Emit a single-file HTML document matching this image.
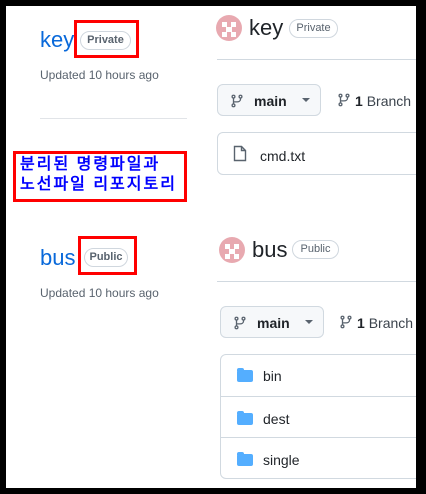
<!DOCTYPE html>
<html><head><meta charset="utf-8"><style>
*{margin:0;padding:0;box-sizing:border-box}
body{width:426px;height:494px;background:#000;position:relative;overflow:hidden;font-family:"Liberation Sans","Noto Sans CJK KR",sans-serif}
.pg{position:absolute;left:6px;top:6px;width:410px;height:482px;background:#fff}
.a{position:absolute}
.badge{position:absolute;border:1px solid #d0d7de;border-radius:10px;font-size:11px;color:#59636e;text-align:center;line-height:17px;font-weight:bold}
.red{position:absolute;border:3px solid #f00}
.upd{position:absolute;font-size:12px;color:#59636e}
.btn{position:absolute;background:#f6f8fa;border:1px solid #d1d9e0;border-radius:6px;font-size:14px;font-weight:bold;color:#1f2328}
.av{position:absolute;width:26px;height:26px;border-radius:50%;background:#e8a9b0;overflow:hidden}
.av i{position:absolute;background:#fff;width:5px;height:5px}
.row{position:absolute;left:0;right:0;height:41px;border-top:1px solid #d1d9e0;font-size:14px;color:#1f2328}
.fold{position:absolute;left:16px;top:16px;width:16px;height:12px;background:#54aeff;border-radius:2px}
.fold:before{content:"";position:absolute;left:0;top:-2px;width:7px;height:3px;background:#54aeff;border-radius:2px 2px 0 0}
</style></head><body>
<div class="pg"></div>
<div class="a" style="left:40px;top:27px;font-size:22px;color:#0969da">key</div>
<div class="red" style="left:74px;top:20px;width:65px;height:38px"></div>
<div class="badge" style="left:80px;top:31px;width:51px;height:19px">Private</div>
<div class="upd" style="left:40px;top:68px">Updated 10 hours ago</div>
<div class="a" style="left:40px;top:118px;width:147px;height:1px;background:#e1e4e8"></div>
<div class="red" style="left:13px;top:151px;width:174px;height:51px"></div>
<div class="a" style="left:20px;top:155px;font-size:16px;line-height:20px;color:#0000ff;font-weight:bold;font-family:'Liberation Sans','WenQuanYi Zen Hei',sans-serif;letter-spacing:2px;white-space:nowrap">분리된 명령파일과<br>노선파일 리포지토리</div>
<div class="a" style="left:40px;top:245px;font-size:22px;color:#0969da">bus</div>
<div class="red" style="left:78px;top:236px;width:59px;height:39px"></div>
<div class="badge" style="left:84px;top:248px;width:44px;height:19px">Public</div>
<div class="upd" style="left:40px;top:286px">Updated 10 hours ago</div>
<div class="av" style="left:216px;top:15px"><i style="left:6px;top:7px"></i><i style="left:15px;top:7px"></i><i style="left:10px;top:12px;width:6px"></i><i style="left:6px;top:17px"></i><i style="left:15px;top:17px"></i></div>
<div class="a" style="left:249px;top:15px;font-size:22px;color:#1f2328">key</div>
<div class="badge" style="left:289px;top:19px;width:49px;height:19px;font-weight:normal">Private</div>
<div class="a" style="left:217px;top:59px;width:199px;height:1px;background:#d1d9e0"></div>
<div class="btn" style="left:217px;top:84px;width:104px;height:32px">
<svg class="a" style="left:12px;top:8px" width="14" height="16" viewBox="0 0 16 16" fill="none" stroke="#59636e" stroke-width="1.5"><circle cx="4" cy="3" r="1.6"/><circle cx="4" cy="13" r="1.6"/><circle cx="12" cy="3" r="1.6"/><path d="M4 5v6M12 5v1c0 2-2 3-4 3H4"/></svg>
<span class="a" style="left:36px;top:8px">main</span><span class="a" style="left:84px;top:13px;border:4px solid transparent;border-top-color:#59636e"></span></div>
<svg class="a" style="left:337px;top:92px" width="14" height="16" viewBox="0 0 16 16" fill="none" stroke="#59636e" stroke-width="1.5"><circle cx="4" cy="3" r="1.6"/><circle cx="4" cy="13" r="1.6"/><circle cx="12" cy="3" r="1.6"/><path d="M4 5v6M12 5v1c0 2-2 3-4 3H4"/></svg>
<div class="a" style="left:355px;top:93px;font-size:14px;font-weight:bold;color:#1f2328">1 <span style="font-weight:normal;color:#3b434c">Branch</span></div>
<div class="a" style="left:217px;top:132px;width:210px;height:43px;border:1px solid #d1d9e0;border-radius:6px">
<svg class="a" style="left:15px;top:12px" width="14" height="17" viewBox="0 0 14 17" fill="none" stroke="#59636e" stroke-width="1.4"><path d="M1.5 1.5h7l4 4v10h-11z M8.5 1.5v4h4"/></svg>
<span class="a" style="left:42px;top:15px;font-size:14px;color:#1f2328">cmd.txt</span></div>
<div class="av" style="left:219px;top:237px"><i style="left:6px;top:7px"></i><i style="left:15px;top:7px"></i><i style="left:10px;top:12px;width:6px"></i><i style="left:6px;top:17px"></i><i style="left:15px;top:17px"></i></div>
<div class="a" style="left:252px;top:237px;font-size:22px;color:#1f2328">bus</div>
<div class="badge" style="left:292px;top:240px;width:47px;height:19px;font-weight:normal">Public</div>
<div class="a" style="left:217px;top:281px;width:199px;height:1px;background:#d1d9e0"></div>
<div class="btn" style="left:220px;top:306px;width:104px;height:32px">
<svg class="a" style="left:12px;top:8px" width="14" height="16" viewBox="0 0 16 16" fill="none" stroke="#59636e" stroke-width="1.5"><circle cx="4" cy="3" r="1.6"/><circle cx="4" cy="13" r="1.6"/><circle cx="12" cy="3" r="1.6"/><path d="M4 5v6M12 5v1c0 2-2 3-4 3H4"/></svg>
<span class="a" style="left:36px;top:8px">main</span><span class="a" style="left:84px;top:13px;border:4px solid transparent;border-top-color:#59636e"></span></div>
<svg class="a" style="left:339px;top:314px" width="14" height="16" viewBox="0 0 16 16" fill="none" stroke="#59636e" stroke-width="1.5"><circle cx="4" cy="3" r="1.6"/><circle cx="4" cy="13" r="1.6"/><circle cx="12" cy="3" r="1.6"/><path d="M4 5v6M12 5v1c0 2-2 3-4 3H4"/></svg>
<div class="a" style="left:357px;top:315px;font-size:14px;font-weight:bold;color:#1f2328">1 <span style="font-weight:normal;color:#3b434c">Branch</span></div>
<div class="a" style="left:220px;top:354px;width:210px;height:125px;border:1px solid #d1d9e0;border-radius:6px;overflow:hidden">
<div class="row" style="top:-1px;border-top:none"><div class="fold"></div><span class="a" style="left:42px;top:14px">bin</span></div>
<div class="row" style="top:41px"><div class="fold"></div><span class="a" style="left:42px;top:14px">dest</span></div>
<div class="row" style="top:82px"><div class="fold"></div><span class="a" style="left:42px;top:14px">single</span></div>
</div>
<div class="a" style="left:416px;top:0;width:10px;height:494px;background:#000"></div>
<div class="a" style="left:0;top:488px;width:426px;height:6px;background:#000"></div>
</body></html>
